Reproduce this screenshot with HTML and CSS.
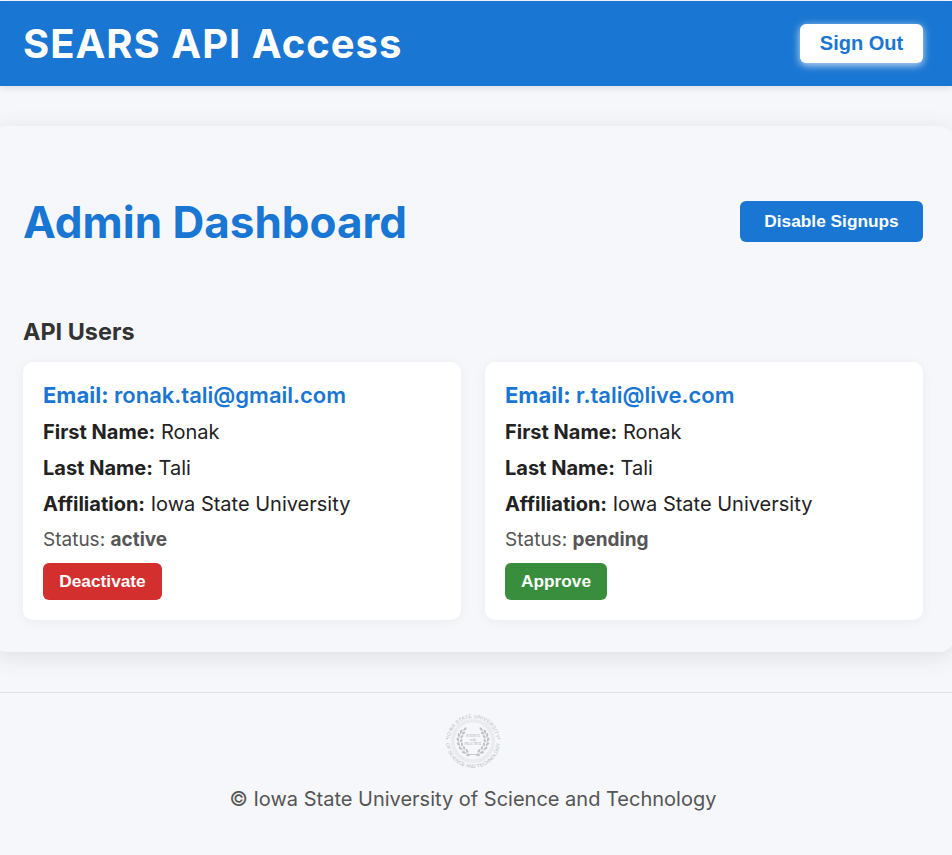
FILE: index.html
```html
<!DOCTYPE html>
<html lang="en">
<head>
<meta charset="utf-8">
<title>SEARS API Access</title>
<link rel="stylesheet" href="styles.css">
</head>
<body>
<header class="topbar">
  <div class="brand">SEARS API Access</div>
  <button class="signout">Sign Out</button>
</header>
<main class="panel">
  <div class="heading">
    <h1>Admin Dashboard</h1>
    <button class="signups">Disable Signups</button>
  </div>
  <h2>API Users</h2>
  <div class="users">
    <article class="card">
      <div class="email"><b>Email:</b> ronak.tali@gmail.com</div>
      <div class="row"><b>First Name:</b> Ronak</div>
      <div class="row"><b>Last Name:</b> Tali</div>
      <div class="row"><b>Affiliation:</b> Iowa State University</div>
      <div class="status">Status: <b>active</b></div>
      <button class="action deactivate">Deactivate</button>
    </article>
    <article class="card">
      <div class="email"><b>Email:</b> r.tali@live.com</div>
      <div class="row"><b>First Name:</b> Ronak</div>
      <div class="row"><b>Last Name:</b> Tali</div>
      <div class="row"><b>Affiliation:</b> Iowa State University</div>
      <div class="status">Status: <b>pending</b></div>
      <button class="action approve">Approve</button>
    </article>
  </div>
</main>
<footer class="footer">
  <svg class="seal" viewBox="0 0 56 56" width="56" height="56">
    <defs>
      <path id="ringTop" d="M4.5 28.5a23.5 23.5 0 0 1 47 0"/>
      <path id="ringBottom" d="M1 28a27 27 0 0 0 54 0"/>
      <g id="branch">
        <path class="stem" d="M19 16.5C10 24 12 38 25.5 41.5"/>
        <ellipse cx="20" cy="16" rx="2" ry="1.1" transform="rotate(-45 20 16)"/>
        <ellipse cx="16" cy="18.5" rx="2" ry="1.1" transform="rotate(-80 16 18.5)"/>
        <ellipse cx="18.5" cy="20" rx="1.8" ry="1.1" transform="rotate(-35 18.5 20)"/>
        <ellipse cx="13.8" cy="22" rx="2" ry="1.1" transform="rotate(80 13.8 22)"/>
        <ellipse cx="16.8" cy="23.6" rx="1.9" ry="1.1" transform="rotate(-50 16.8 23.6)"/>
        <ellipse cx="12.8" cy="26.5" rx="2" ry="1.1" transform="rotate(65 12.8 26.5)"/>
        <ellipse cx="16.2" cy="27.6" rx="1.9" ry="1.1" transform="rotate(-65 16.2 27.6)"/>
        <ellipse cx="13.4" cy="31" rx="2" ry="1.1" transform="rotate(50 13.4 31)"/>
        <ellipse cx="17" cy="31.4" rx="1.9" ry="1.1" transform="rotate(-85 17 31.4)"/>
        <ellipse cx="15.4" cy="35.4" rx="2" ry="1.1" transform="rotate(35 15.4 35.4)"/>
        <ellipse cx="19" cy="34.8" rx="1.9" ry="1.1" transform="rotate(75 19 34.8)"/>
        <ellipse cx="18.8" cy="39.4" rx="2.1" ry="1.1" transform="rotate(15 18.8 39.4)"/>
        <ellipse cx="22" cy="37.8" rx="1.9" ry="1.1" transform="rotate(55 22 37.8)"/>
        <ellipse cx="23" cy="42" rx="2" ry="1" transform="rotate(-5 23 42)"/>
      </g>
    </defs>
    <g class="seal-text">
      <text><textPath href="#ringTop" startOffset="50%" text-anchor="middle" textLength="66">IOWA STATE UNIVERSITY</textPath></text>
      <text><textPath href="#ringBottom" startOffset="50%" text-anchor="middle" textLength="80">OF SCIENCE AND TECHNOLOGY</textPath></text>
      <circle cx="2" cy="25.5" r=".8"/>
      <circle cx="54" cy="25.5" r=".8"/>
    </g>
    <circle class="seal-band" cx="28" cy="28" r="20.3"/>
    <g class="laurel">
      <use href="#branch"/>
      <use href="#branch" transform="matrix(-1 0 0 1 56 0)"/>
      <path class="stem" d="M25 41.5h6l2 2M31 41.5h-6l-2 2"/>
    </g>
    <g class="seal-center">
      <text x="28" y="24.2" text-anchor="middle" textLength="14" lengthAdjust="spacingAndGlyphs">SCIENCE</text>
      <text x="28" y="28.2" text-anchor="middle" textLength="6" lengthAdjust="spacingAndGlyphs">with</text>
      <text x="28" y="32.2" text-anchor="middle" textLength="17" lengthAdjust="spacingAndGlyphs">PRACTICE</text>
    </g>
  </svg>
  <p>© Iowa State University of Science and Technology</p>
</footer>
</body>
</html>
```
FILE: styles.css
```css
* { box-sizing: border-box; }
body { margin: 0; background: #f5f7fb; font-family: Inter, "Liberation Sans", sans-serif; color: #222; font-size: 20px; overflow-x: hidden; }
b { font-weight: 700; }
button { font-family: "Liberation Sans", sans-serif; font-weight: 700; border: 0; border-radius: 6px; padding: 0; color: #fff; }
.topbar { margin-top: 1px; height: 85px; padding: 0 29px 0 23px; background: #1976d2; display: flex; align-items: center; justify-content: space-between; box-shadow: 0 2px 8px rgba(0,0,0,.1); }
.brand { color: #fff; font-size: 40px; font-weight: 700; letter-spacing: 1px; line-height: 48px; }
.signout { width: 123px; height: 39px; background: #fff; color: #1976d2; font-size: 20px; box-shadow: 0 2px 8px rgba(255,255,255,.8); }
.panel { margin: 40px -3px 0 -9px; height: 526px; padding: 69px 32px 0 32px; border-radius: 16px; box-shadow: 0 4px 24px rgba(0,0,0,.1); }
.heading { height: 53px; display: flex; align-items: center; justify-content: space-between; }
h1 { margin: 0; padding-top: 2px; color: #1976d2; font-size: 44px; line-height: 53px; font-weight: 700; }
.signups { width: 183px; height: 41px; background: #1976d2; font-size: 17.3px; }
h2 { margin: 69px 0 16px; font-size: 23.4px; line-height: 29px; font-weight: 700; color: #333; }
.users { display: grid; grid-template-columns: 1fr 1fr; gap: 24px; }
.card { height: 258px; padding: 20px; background: #fff; border-radius: 10px; box-shadow: 0 2px 12px rgba(0,0,0,.05); }
.email { color: #1976d2; font-size: 22px; font-weight: 600; line-height: 27px; margin-bottom: 11px; }
.row { line-height: 24px; margin-bottom: 12px; }
.status { font-size: 19px; line-height: 23px; color: #555; margin-bottom: 12px; }
.action { height: 37px; font-size: 17.3px; display: block; }
.deactivate { width: 119px; background: #d32f2f; }
.approve { width: 102px; background: #388e3c; }
.footer { margin-top: 40px; border-top: 1px solid #e0e0e0; padding-top: 20px; display: flex; flex-direction: column; align-items: center; padding-right: 6px; }
.footer p { margin: 18px 0 0; font-size: 20px; line-height: 24px; color: #555; }
.seal { display: block; overflow: visible; fill: #babcbf; font-family: "Liberation Sans", sans-serif; }
.seal-text { font-size: 5px; }
.seal-center { font-size: 3px; font-family: "Liberation Serif", serif; fill: #a8aaad; }
.seal-band { fill: none; stroke: #e9ebee; stroke-width: 3.6; }
.laurel { fill: #bfc1c4; }
.stem { fill: none; stroke: #bfc1c4; stroke-width: .6; }
```
